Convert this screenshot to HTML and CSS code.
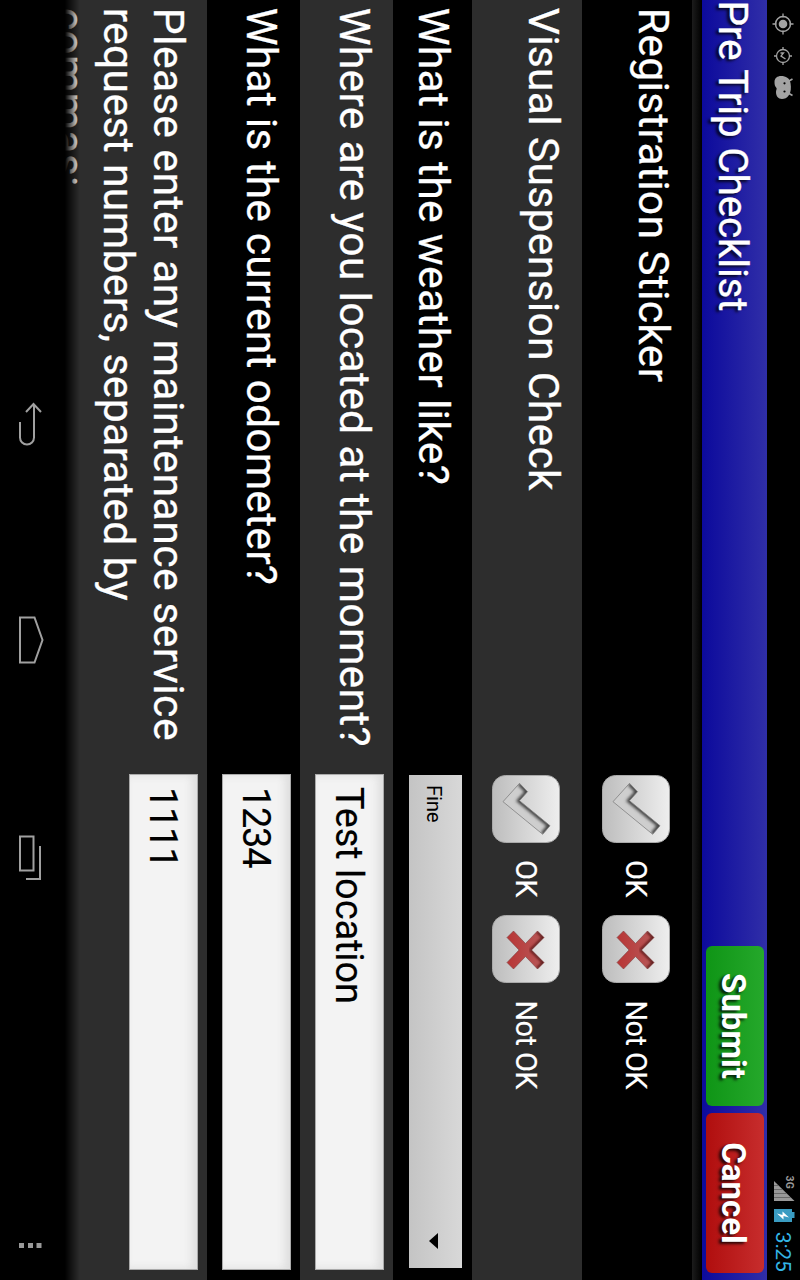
FILE: index.html
```html
<!DOCTYPE html>
<html lang="en">
<head>
<meta charset="utf-8">
<title>Pre Trip Checklist</title>
<link rel="stylesheet" href="styles.css">
</head>
<body>
<svg width="0" height="0" class="defs" aria-hidden="true">
  <defs>
    <linearGradient id="face" x1="0" y1="0" x2="0" y2="1"><stop offset="0" stop-color="#eee"/><stop offset="1" stop-color="#bdbdbd"/></linearGradient>
    <linearGradient id="red" x1="0" y1="0" x2="0" y2="1"><stop offset=".2" stop-color="#b85c5c"/><stop offset=".8" stop-color="#b83434"/></linearGradient>
    <filter id="soft" x="-20%" y="-20%" width="140%" height="140%"><feGaussianBlur stdDeviation="1.800"/></filter>
    <clipPath id="tickClip"><path d="M8.300 40.500 L16.700 32.500 L25.700 40.500 L50.700 10 L59.300 17.300 L26.700 57 Z"/></clipPath>
    <clipPath id="crossClip"><path d="M16 22.500 L22.500 16 L35 28.500 L47.500 16 L54 22.500 L41.500 34.500 L54 46.500 L47.500 53 L35 41 L22.500 53 L16 46.500 L28.500 34.500 Z"/></clipPath>
    <symbol id="tick" viewBox="0 0 68 68">
      <rect x=".5" y=".5" width="67" height="67" rx="13" fill="url(#face)" stroke="#aaa"/>
      <g clip-path="url(#tickClip)">
        <rect width="68" height="68" fill="#cecece"/>
        <path d="M8.300 40.500 L16.700 32.500 L25.700 40.500 L50.700 10 L59.300 17.300" fill="none" stroke="#444" stroke-width="5" filter="url(#soft)"/>
      </g>
      <path d="M8.300 40.500 L16.700 32.500 L25.700 40.500 L50.700 10 L59.300 17.300 L26.700 57 Z" fill="none" stroke="#808080" stroke-width=".8" stroke-linejoin="round"/>
    </symbol>
    <symbol id="cross" viewBox="0 0 68 68">
      <rect x=".5" y=".5" width="67" height="67" rx="13" fill="url(#face)" stroke="#aaa"/>
      <g clip-path="url(#crossClip)">
        <rect width="68" height="68" fill="url(#red)"/>
        <path d="M16 22.500 L22.500 16 L35 28.500 L47.500 16 L54 22.500" fill="none" stroke="#4a1010" stroke-width="3" filter="url(#soft)"/>
      </g>
      <path d="M16 22.500 L22.500 16 L35 28.500 L47.500 16 L54 22.500 L41.500 34.500 L54 46.500 L47.500 53 L35 41 L22.500 53 L16 46.500 L28.500 34.500 Z" fill="none" stroke="#7d4040" stroke-width=".6"/>
    </symbol>
  </defs>
</svg>
<div class="stage">
<div class="device">
  <header class="status">
    <svg class="status-left" width="110" height="33" viewBox="0 0 110 33" fill="none" stroke="#a3a3a3">
      <circle cx="24" cy="17" r="7.500" stroke-width="1.500"/><circle cx="24" cy="17" r="4.300" fill="#a3a3a3" stroke="none"/>
      <path d="M24 6.500v4M24 23.500v4M13.500 17h4M30.500 17h4" stroke-width="1.300"/>
      <circle cx="56" cy="17" r="6.500" stroke-width="1.300"/><path d="M56 8v3M56 23v3M47 17h3M62 17h3" stroke-width="1.300"/>
      <path d="M53 19.500v-3l3 2.500 3-4.500" stroke-width="1.300"/>
      <path d="M76 19c0-5 2-8.500 7-9.500 5-.800 9-.500 12 1.500 3 2 4 4.500 4 7 0 4-3 6-7 6-2 0-3-1-4-.500-1.500 1.500-3 2-6 2-4 0-6-3-6-6.500z" fill="#a3a3a3" stroke="none"/>
      <path d="M81 11l-2-3.500M93.500 11l2-3.500" stroke-width="1.600"/>
      <circle cx="83.300" cy="15.500" r="1.100" fill="#000" stroke="none"/><circle cx="91.500" cy="15.500" r="1.100" fill="#000" stroke="none"/>
    </svg>
    <div class="status-right">
      <span class="net">3G</span>
      <svg width="46" height="33" viewBox="1174 0 46 33">
        <path d="M1180 26L1200 5.500V26z" fill="#999"/><path d="M1184.500 21.500V26M1188.500 17.500V26M1192.500 13.500V26M1196.500 9.500V26" stroke="#555" stroke-width=".7"/>
        <path d="M1208 8h3V5.500h6V8h4v18h-13z" fill="#3a9cc2"/>
        <path d="M1216.500 11l-6 6.500h3.500l-1.500 5.500 6-6.500h-3.500z" fill="#fff"/>
      </svg>
      <span class="clock">3:25</span>
    </div>
  </header>
  <div class="titlebar">
    <h1 class="title">Pre Trip Checklist</h1>
    <button class="btn submit">Submit</button>
    <button class="btn cancel">Cancel</button>
  </div>
  <main class="list">
    <div class="row check"><div class="label q1">Registration Sticker</div><div class="choices"><svg class="ico"><use href="#tick"/></svg><span class="ok">OK</span><svg class="ico"><use href="#cross"/></svg><span class="nok">Not OK</span></div></div>
    <div class="row check alt"><div class="label q2">Visual Suspension Check</div><div class="choices"><svg class="ico"><use href="#tick"/></svg><span class="ok">OK</span><svg class="ico"><use href="#cross"/></svg><span class="nok">Not OK</span></div></div>
    <div class="row pick"><div class="label q3">What is the weather like?</div><div class="spinner"><span>Fine</span><svg width="16" height="9" viewBox="0 0 16 9"><path d="M0 0h16L8 9z"/></svg></div></div>
    <div class="row entry alt"><div class="label q4">Where are you located at the moment?</div><div class="field">Test location</div></div>
    <div class="row entry"><div class="label q5">What is the current odometer?</div><div class="field num">1234</div></div>
    <div class="row last alt"><div class="label q6"><span class="line1">Please enter any maintenance service</span><br><span class="line2">request numbers, separated by</span><br>commas:</div><div class="field num">1111</div></div>
  </main>
  <nav class="nav">
    <svg width="1280" height="65" viewBox="0 735 1280 65" fill="none" stroke="#a0a0a0" stroke-width="2">
      <path d="M422 780H437.500a7 7 0 0 0 0-14H404M412 759l-8 7.500 8 7.500"/>
      <path d="M617.500 780V765.500L640 757.500 662.500 765.500V780z"/>
      <path d="M836.500 766.500h34v13.500h-34zM846 760h33v14"/>
      <path d="M1243 761h5M1243 769.500h5M1243 778.500h5" stroke-width="5" stroke="#999"/>
    </svg>
  </nav>
</div>
</div>
</body>
</html>
```
FILE: styles.css
```css
html { overflow: hidden; }
body { margin: 0; width: 800px; height: 1280px; overflow: hidden; background: #000; }
.defs { display: block; width: 0; height: 0; }
.stage { width: 800px; height: 1280px; overflow: hidden; }
/* landscape screen shown turned clockwise */
.device { width: 1280px; height: 800px; display: flex; flex-direction: column; transform-origin: 0 0; transform: translateX(800px) rotate(90deg); background: #000; color: #fff; font-family: Roboto, "Liberation Sans", sans-serif; overflow: hidden; white-space: nowrap; }
.status { height: 33px; flex: none; display: flex; justify-content: space-between; }
.status-right { display: flex; padding-right: 8.500px; }
.status-right svg { margin-right: 11px; overflow: visible; }
.net { color: #999; font-size: 10.500px; font-weight: 700; line-height: 12px; margin: 5px -14px 0 0; }
.clock { color: #33b5e5; font-size: 21px; line-height: 35px; letter-spacing: -.2px; }
.titlebar { height: 65px; flex: none; box-sizing: border-box; display: flex; align-items: flex-start; gap: 7px; padding: 3px 7px 4px 0; background: linear-gradient(#302ea8, #0c0a9c); }
.title { margin: 0; flex: 1; font-size: 40.500px; line-height: 50px; font-weight: 400; padding: 6px 0 0 .5px; letter-spacing: -.2px; -webkit-text-stroke: .3px #fff; text-shadow: 2px 3px 3px rgba(0,0,0,.8); }
.btn { width: 160px; height: 58px; padding: 4px 0 0; border: 0; border-radius: 6px; color: #fff; font: 700 33px/54px Roboto, sans-serif; text-shadow: 2px 3px 3px rgba(0,0,0,.8); }
.submit { background: linear-gradient(#25a82b, #0f9516); }
.cancel { background: linear-gradient(#c72d2d, #b00e0e); }
.list { flex: none; height: 637px; position: relative; overflow: hidden; box-sizing: border-box; padding-top: 10px; background: linear-gradient(#000, #1c1c1c 10px, #000 10px); }
.list::after { content: ""; position: absolute; left: 0; right: 0; bottom: 0; height: 15px; background: linear-gradient(transparent, #000); }
.row { display: flex; box-sizing: border-box; padding-left: 7px; background: #000; }
.alt { background: #2d2d2d; }
.label { width: 768px; flex: none; box-sizing: border-box; font-size: 42.670px; line-height: 50px; padding: 13px 0 0 .7px; letter-spacing: .28px; -webkit-text-stroke: .25px #fff; }
.q5 { letter-spacing: .2px; }
.line1 { letter-spacing: .48px; }
.line2 { letter-spacing: .33px; }
.check { height: 110px; }
.choices { display: flex; align-items: center; height: 68px; margin-top: 22px; font-size: 29px; letter-spacing: -.6px; }
.choices span { box-sizing: border-box; -webkit-text-stroke: .15px #fff; }
.ico { width: 68px; height: 68px; flex: none; }
.ok { width: 72px; padding-left: 17px; }
.nok { padding-left: 17.500px; }
.pick { height: 79px; }
.spinner { width: 493px; height: 53px; margin-top: 10px; box-sizing: border-box; padding: 3px 19px 0 10px; display: flex; align-items: center; justify-content: space-between; background: linear-gradient(#d8d8d8, #c4c4c4); color: #000; font-size: 20.500px; letter-spacing: -.3px; }
.entry { height: 93px; }
.field { width: 496px; height: 69px; margin: 9px 0 0 -1px; box-sizing: border-box; padding-left: 12px; background: #f3f3f3; border: 1px solid #aaa; box-shadow: inset 0 5px 8px #ddd; color: #000; font-size: 38px; line-height: 68px; letter-spacing: -.1px; -webkit-text-stroke: .15px #000; }
.num { letter-spacing: -1.300px; }
.last { height: 200px; }
.nav { height: 65px; flex: none; }
.nav svg { display: block; }
```
